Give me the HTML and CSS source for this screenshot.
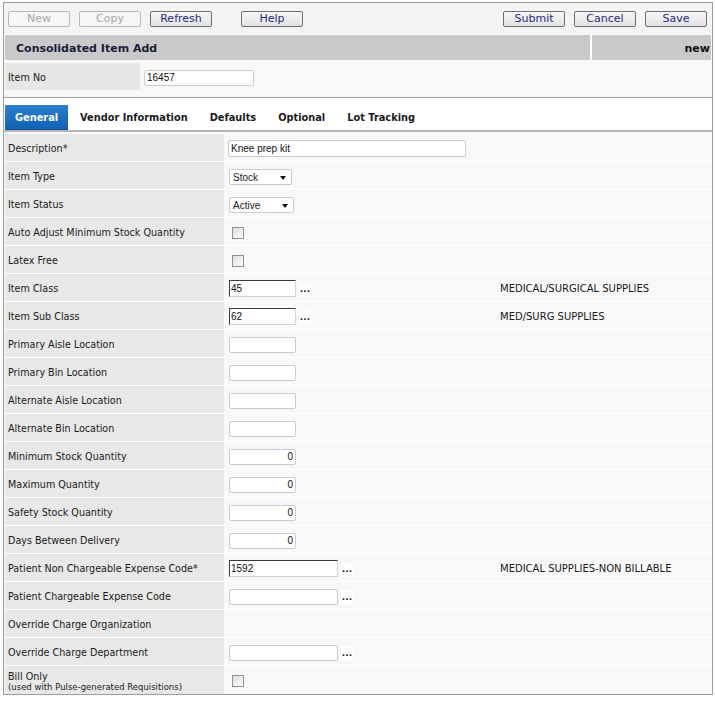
FILE: index.html
```html
<!DOCTYPE html>
<html lang="en">
<head>
    <meta charset="UTF-8">
    <title>Consolidated Item Add</title>
    <link rel="stylesheet" href="styles.css">
</head>
<body>
    <div class="frame">
        <div class="toolbar">
            <div class="group">
                <button class="btn" disabled>New</button>
                <button class="btn" disabled>Copy</button>
                <button class="btn">Refresh</button>
                <button class="btn help">Help</button>
            </div>
            <div class="group">
                <button class="btn">Submit</button>
                <button class="btn">Cancel</button>
                <button class="btn">Save</button>
            </div>
        </div>

        <div class="header">
            <div class="title">Consolidated Item Add</div>
            <div class="mode">new</div>
        </div>

        <div class="item-no">
            <div class="item-label">Item No</div>
            <input type="text" class="txt item-input" value="16457">
        </div>

        <div class="tabs">
            <span class="tab active">General</span>
            <span class="tab">Vendor Information</span>
            <span class="tab">Defaults</span>
            <span class="tab">Optional</span>
            <span class="tab">Lot Tracking</span>
        </div>

        <div class="form">
            <div class="row">
                <div class="label">Description*</div>
                <div class="value"><input type="text" class="txt desc" value="Knee prep kit"></div>
            </div>
            <div class="row">
                <div class="label">Item Type</div>
                <div class="value"><div class="select">Stock<span class="arrow"></span></div></div>
            </div>
            <div class="row">
                <div class="label">Item Status</div>
                <div class="value"><div class="select wide">Active<span class="arrow"></span></div></div>
            </div>
            <div class="row">
                <div class="label">Auto Adjust Minimum Stock Quantity</div>
                <div class="value"><input type="checkbox" class="chk"></div>
            </div>
            <div class="row">
                <div class="label">Latex Free</div>
                <div class="value"><input type="checkbox" class="chk"></div>
            </div>
            <div class="row">
                <div class="label">Item Class</div>
                <div class="value">
                    <span class="lookup"><input type="text" class="txt short inset" value="45"><span class="dots">...</span></span>
                    <span class="note">MEDICAL/SURGICAL SUPPLIES</span>
                </div>
            </div>
            <div class="row">
                <div class="label">Item Sub Class</div>
                <div class="value">
                    <span class="lookup"><input type="text" class="txt short inset" value="62"><span class="dots">...</span></span>
                    <span class="note">MED/SURG SUPPLIES</span>
                </div>
            </div>
            <div class="row">
                <div class="label">Primary Aisle Location</div>
                <div class="value"><input type="text" class="txt short"></div>
            </div>
            <div class="row">
                <div class="label">Primary Bin Location</div>
                <div class="value"><input type="text" class="txt short"></div>
            </div>
            <div class="row">
                <div class="label">Alternate Aisle Location</div>
                <div class="value"><input type="text" class="txt short"></div>
            </div>
            <div class="row">
                <div class="label">Alternate Bin Location</div>
                <div class="value"><input type="text" class="txt short"></div>
            </div>
            <div class="row">
                <div class="label">Minimum Stock Quantity</div>
                <div class="value"><input type="text" class="txt short num" value="0"></div>
            </div>
            <div class="row">
                <div class="label">Maximum Quantity</div>
                <div class="value"><input type="text" class="txt short num" value="0"></div>
            </div>
            <div class="row">
                <div class="label">Safety Stock Quantity</div>
                <div class="value"><input type="text" class="txt short num" value="0"></div>
            </div>
            <div class="row">
                <div class="label">Days Between Delivery</div>
                <div class="value"><input type="text" class="txt short num" value="0"></div>
            </div>
            <div class="row">
                <div class="label">Patient Non Chargeable Expense Code*</div>
                <div class="value">
                    <span class="lookup"><input type="text" class="txt code inset" value="1592"><span class="dots">...</span></span>
                    <span class="note">MEDICAL SUPPLIES-NON BILLABLE</span>
                </div>
            </div>
            <div class="row">
                <div class="label">Patient Chargeable Expense Code</div>
                <div class="value">
                    <span class="lookup"><input type="text" class="txt code"><span class="dots">...</span></span>
                </div>
            </div>
            <div class="row">
                <div class="label">Override Charge Organization</div>
                <div class="value"></div>
            </div>
            <div class="row">
                <div class="label">Override Charge Department</div>
                <div class="value">
                    <span class="lookup"><input type="text" class="txt code"><span class="dots">...</span></span>
                </div>
            </div>
            <div class="row last">
                <div class="label two-line">Bill Only<small>(used with Pulse-generated Requisitions)</small></div>
                <div class="value"><input type="checkbox" class="chk"></div>
            </div>
        </div>
    </div>
</body>
</html>
```

FILE: styles.css
```css
* {
    box-sizing: border-box;
}

body {
    margin: 0;
    background: #ffffff;
    font-family: "DejaVu Sans", Verdana, sans-serif;
    font-size: 9.6px;
    color: #1a1a1a;
}

.frame {
    margin: 2px 0 0 3px;
    width: 710px;
    border: 1px solid #9c9c9c;
    background: #f8f8f8;
}

/* top buttons */
.toolbar {
    display: flex;
    justify-content: space-between;
    padding: 8px 5px 7px 4px;
    background: #f4f4f4;
}

.group {
    display: flex;
    gap: 9px;
}

.btn {
    width: 62px;
    height: 16px;
    padding: 0;
    border: 1px solid #6e6e6e;
    border-radius: 2px;
    background: linear-gradient(#f7f7f7, #e2e2e2);
    font-family: "DejaVu Sans", Verdana, sans-serif;
    font-size: 11px;
    line-height: 14px;
    color: #1c2b86;
}

.btn:disabled {
    border-color: #b9b9b9;
    background: #f6f6f6;
    color: #a8a8a8;
}

.btn.help {
    margin-left: 20px;
}

/* title band */
.header {
    display: flex;
    gap: 2px;
    margin: 1px 1px 0 1px;
    height: 25px;
    background: #ffffff;
}

.title {
    width: 585px;
    background: #c9c9c9;
    padding-left: 11px;
    font-size: 11px;
    font-weight: bold;
    line-height: 27px;
    color: #1a1d3a;
}

.mode {
    flex: 1;
    background: #c9c9c9;
    text-align: right;
    padding-right: 1px;
    font-size: 11px;
    font-weight: bold;
    line-height: 27px;
    color: #111;
}

.item-no {
    display: flex;
    align-items: center;
    margin: 3px 0 7px 1px;
    height: 27px;
}

.item-label {
    width: 135px;
    height: 27px;
    line-height: 29px;
    padding-left: 3px;
    background: #e6e6e6;
}

.item-input {
    margin: 2px 0 0 4px;
    width: 110px;
}

/* tabs */
.tabs {
    display: flex;
    align-items: flex-end;
    height: 35px;
    padding: 7px 0 0 1px;
    border-top: 1px solid #a2a2a2;
    border-bottom: 2px solid #b5b5b5;
    background: #ffffff;
}

.tab {
    height: 25px;
    line-height: 25px;
    padding: 0 11px;
    font-size: 9.8px;
    font-weight: bold;
    color: #1b1b1b;
}

.tab.active {
    width: 63px;
    padding: 0 0 0 10px;
    margin-right: 1px;
    background: linear-gradient(#2a7fd0, #1161b4);
    border-bottom: 1px solid #0d4f95;
    color: #ffffff;
}

/* form rows */
.form {
    padding: 2px 0 0 1px;
}

.row {
    display: flex;
    height: 28px;
    border-bottom: 1px solid #ffffff;
}

.row.last {
    border-bottom: none;
}

.label {
    width: 219px;
    margin-right: 2px;
    padding-left: 3px;
    line-height: 29px;
    background: #e8e8e8;
    white-space: nowrap;
}

.label.two-line {
    line-height: 11px;
    padding-top: 5px;
}

.label small {
    display: block;
    font-size: 8.5px;
}

.value {
    flex: 1;
    display: flex;
    align-items: center;
    padding: 2px 0 0 3px;
    background: #f8f8f8;
}

.txt {
    height: 16px;
    padding: 0 2px;
    border: 1px solid #c5ccd4;
    border-radius: 2px;
    background: #ffffff;
    font-family: "Liberation Sans", Arial, sans-serif;
    font-size: 10px;
    color: #111;
}

.txt.desc {
    width: 238px;
    height: 17px;
    margin-left: -1px;
}

.txt.short {
    width: 67px;
}

.txt.code {
    width: 109px;
}

.txt.num {
    text-align: right;
}

.txt.inset {
    height: 17px;
    border-radius: 0;
    border-color: #3a3a3a #d6d6d6 #d6d6d6 #3a3a3a;
    padding-left: 1px;
}

.lookup {
    display: flex;
    align-items: center;
    width: 271px;
}

.dots {
    width: 12px;
    height: 14px;
    margin: 2px 0 0 3px;
    background: #ffffff;
    font-weight: bold;
    font-size: 9px;
    line-height: 12px;
    text-align: center;
    color: #222;
}

.note {
    font-size: 10px;
    color: #1a1a1a;
}

.select {
    position: relative;
    width: 63px;
    height: 16px;
    padding-left: 3px;
    border: 1px solid #c5ccd4;
    border-radius: 2px;
    background: #ffffff;
    font-family: "Liberation Sans", Arial, sans-serif;
    font-size: 10px;
    line-height: 15px;
}

.select.wide {
    width: 65px;
}

.arrow {
    position: absolute;
    right: 5px;
    top: 6px;
    border-left: 3px solid transparent;
    border-right: 3px solid transparent;
    border-top: 4px solid #111;
}

.chk {
    appearance: none;
    width: 12px;
    height: 12px;
    margin: 0 0 0 3px;
    border: 1px solid #8f8f8f;
    background: linear-gradient(135deg, #dcdcdc, #ffffff);
}
```
